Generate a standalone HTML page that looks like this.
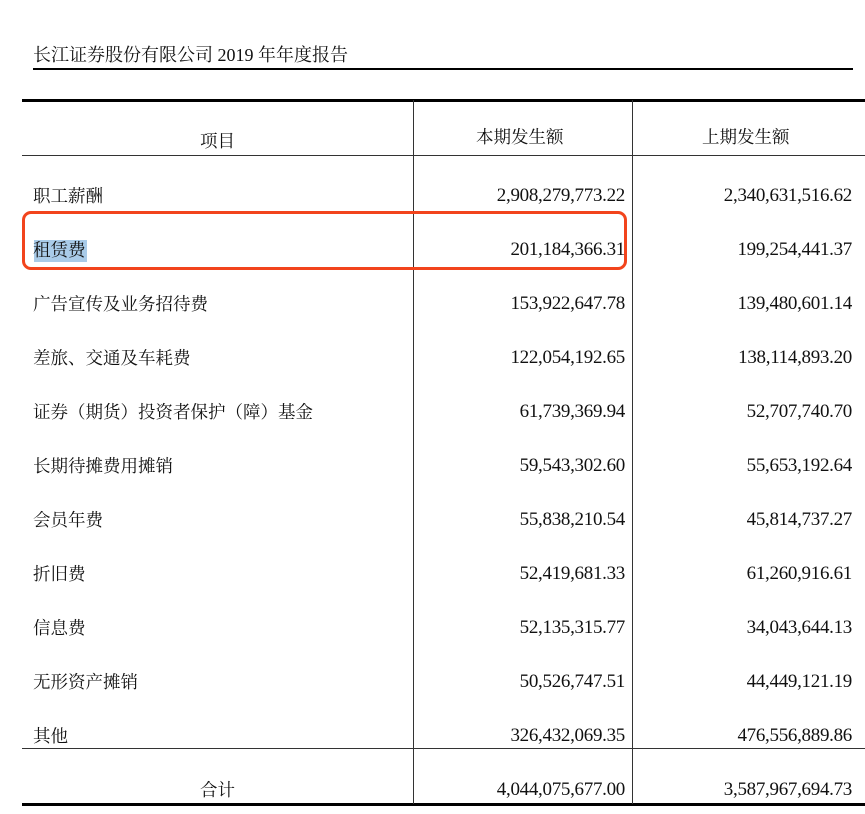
<!DOCTYPE html>
<html><head><meta charset="utf-8"><style>
body{margin:0;width:865px;height:814px;background:#fff;position:relative;overflow:hidden;font-family:"Liberation Serif","Noto Serif CJK SC",serif;color:#111}
.a{position:absolute;white-space:nowrap;font-size:17.5px;line-height:20px}
.r{text-align:right;font-size:19px;letter-spacing:-0.3px}
.l{position:absolute;background:#000}
</style></head><body>
<div class="a" style="left:33px;top:45px;font-size:18px">长江证券股份有限公司 2019 年年度报告</div>
<div class="l" style="left:33px;top:68px;width:820px;height:2px"></div>
<div class="l" style="left:22px;top:99px;width:843px;height:3px"></div>
<div class="l" style="left:22px;top:155px;width:843px;height:1px;background:#333"></div>
<div class="l" style="left:22px;top:748px;width:843px;height:1px;background:#333"></div>
<div class="l" style="left:22px;top:803px;width:843px;height:3px"></div>
<div class="l" style="left:413px;top:100px;width:1px;height:704px;background:#333"></div>
<div class="l" style="left:632px;top:100px;width:1px;height:704px;background:#333"></div>
<div class="a" style="left:200px;top:131px">项目</div>
<div class="a" style="left:476px;top:127px">本期发生额</div>
<div class="a" style="left:702px;top:127px">上期发生额</div>
<div style="position:absolute;left:34px;top:240px;width:53px;height:22px;background:#a9cbe8"></div>
<div style="position:absolute;left:22px;top:211px;width:599px;height:53px;border:3px solid #f2441c;border-radius:9px"></div>
<div class="a" style="left:33px;top:186px">职工薪酬</div>
<div class="a" style="left:33px;top:240px">租赁费</div>
<div class="a" style="left:33px;top:294px">广告宣传及业务招待费</div>
<div class="a" style="left:33px;top:348px">差旅、交通及车耗费</div>
<div class="a" style="left:33px;top:402px">证券（期货）投资者保护（障）基金</div>
<div class="a" style="left:33px;top:456px">长期待摊费用摊销</div>
<div class="a" style="left:33px;top:510px">会员年费</div>
<div class="a" style="left:33px;top:564px">折旧费</div>
<div class="a" style="left:33px;top:618px">信息费</div>
<div class="a" style="left:33px;top:672px">无形资产摊销</div>
<div class="a" style="left:33px;top:726px">其他</div>
<div class="a" style="left:200px;top:780px">合计</div>
<div class="a r" style="right:240px;top:186px">2,908,279,773.22</div>
<div class="a r" style="right:240px;top:240px">201,184,366.31</div>
<div class="a r" style="right:240px;top:294px">153,922,647.78</div>
<div class="a r" style="right:240px;top:348px">122,054,192.65</div>
<div class="a r" style="right:240px;top:402px">61,739,369.94</div>
<div class="a r" style="right:240px;top:456px">59,543,302.60</div>
<div class="a r" style="right:240px;top:510px">55,838,210.54</div>
<div class="a r" style="right:240px;top:564px">52,419,681.33</div>
<div class="a r" style="right:240px;top:618px">52,135,315.77</div>
<div class="a r" style="right:240px;top:672px">50,526,747.51</div>
<div class="a r" style="right:240px;top:726px">326,432,069.35</div>
<div class="a r" style="right:240px;top:780px">4,044,075,677.00</div>
<div class="a r" style="right:13px;top:186px">2,340,631,516.62</div>
<div class="a r" style="right:13px;top:240px">199,254,441.37</div>
<div class="a r" style="right:13px;top:294px">139,480,601.14</div>
<div class="a r" style="right:13px;top:348px">138,114,893.20</div>
<div class="a r" style="right:13px;top:402px">52,707,740.70</div>
<div class="a r" style="right:13px;top:456px">55,653,192.64</div>
<div class="a r" style="right:13px;top:510px">45,814,737.27</div>
<div class="a r" style="right:13px;top:564px">61,260,916.61</div>
<div class="a r" style="right:13px;top:618px">34,043,644.13</div>
<div class="a r" style="right:13px;top:672px">44,449,121.19</div>
<div class="a r" style="right:13px;top:726px">476,556,889.86</div>
<div class="a r" style="right:13px;top:780px">3,587,967,694.73</div>
</body></html>
